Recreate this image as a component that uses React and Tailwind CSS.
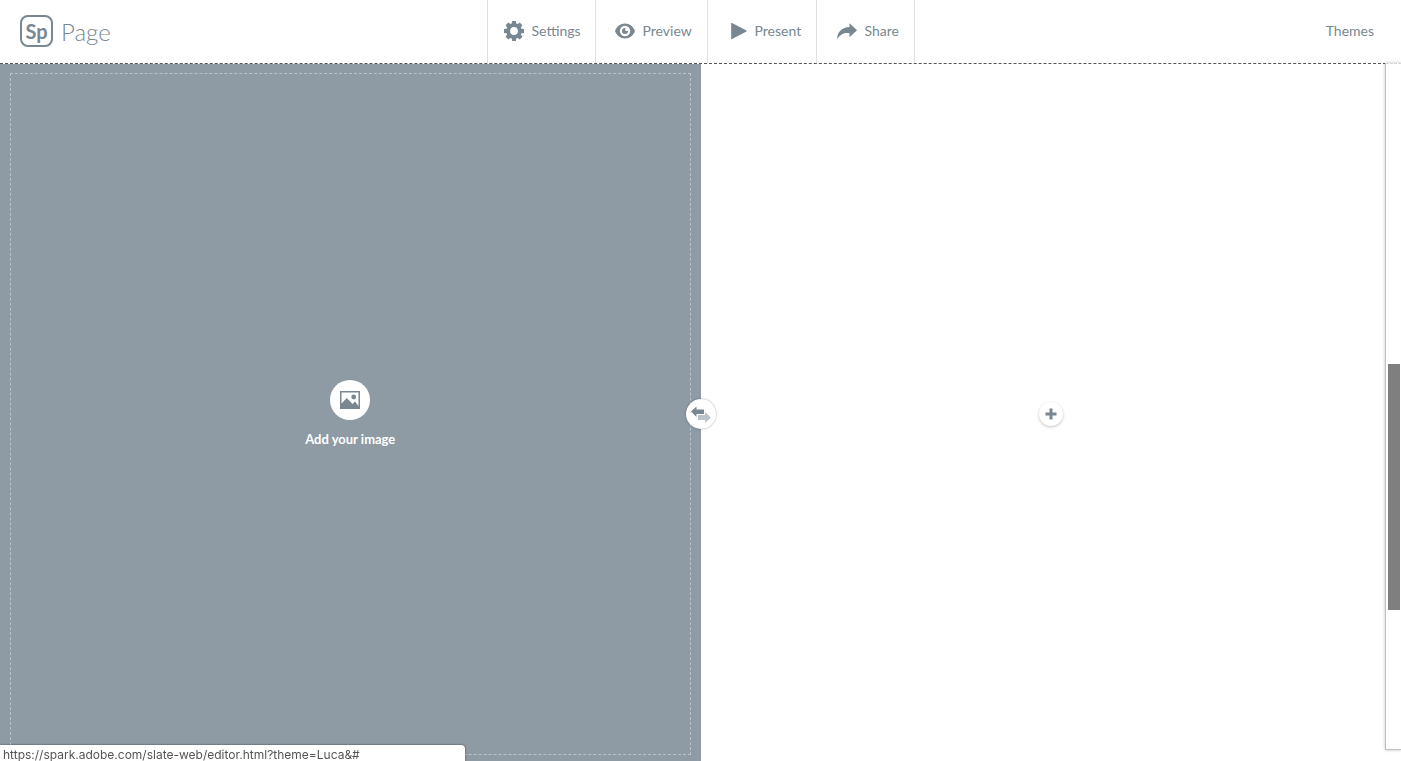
const SettingsIcon = () => (
  <svg viewBox="0 0 20 20" className="h-5 w-5" fill="currentColor" aria-hidden="true">
    <path
      fillRule="evenodd"
      d="M8.100 0h3.800l.4 2.600 1.300.5 2.200-1.500 2.600 2.600-1.500 2.200.5 1.300 2.600.4v3.800l-2.600.4-.5 1.300 1.500 2.200-2.600 2.600-2.200-1.500-1.300.5-.4 2.600H8.100l-.4-2.600-1.300-.5-2.200 1.500-2.600-2.600 1.500-2.200-.5-1.300L0 11.900V8.100l2.600-.4.500-1.300-1.500-2.200 2.600-2.600 2.200 1.500 1.300-.5zM10 6.100a3.900 3.900 0 1 0 0 7.800 3.900 3.900 0 0 0 0-7.800z"
    />
  </svg>
);

const PreviewIcon = () => (
  <svg viewBox="0 0 20 16" className="h-4 w-5" fill="currentColor" aria-hidden="true">
    <path
      fillRule="evenodd"
      d="M10 .5C5.400.5 1.800 3.400 0 8c1.800 4.600 5.400 7.500 10 7.500s8.200-2.900 10-7.500C18.200 3.400 14.600.5 10 .5zm0 2.300a5.200 5.200 0 1 1 0 10.400 5.200 5.200 0 0 1 0-10.400z"
    />
    <path d="M10 5a3 3 0 1 0 3 3h-2.700V5z" />
  </svg>
);

const PresentIcon = () => (
  <svg viewBox="0 0 16 16" className="h-4 w-4" fill="currentColor" aria-hidden="true">
    <path d="M.2 0h.8L15.500 7.500v1L1 16H.2z" />
  </svg>
);

const ShareIcon = () => (
  <svg viewBox="0 0 20 17" className="h-[17px] w-5" fill="currentColor" aria-hidden="true">
    <path d="M12.500.3 20 7.300l-7.500 6.900V10C6.700 9.500 3 11.300.3 16.300-.2 9.500 4.800 4.400 12.500 4z" />
  </svg>
);

const ImageIcon = () => (
  <svg viewBox="0 0 20 18" className="h-[18px] w-5" aria-hidden="true">
    <rect width="20" height="18" fill="#788791" />
    <path
      d="M1.500 1.500h17v13.500l-3.500-4.500-2.500 2.500-5.700-6-5.300 5.500z"
      fill="#fff"
    />
    <circle cx="13.700" cy="6" r="2.400" fill="#788791" />
  </svg>
);

const SwapIcon = () => (
  <svg viewBox="0 0 20 17" className="h-[17px] w-5" aria-hidden="true">
    <path d="M0 5.500 5.500.5v3H13v4.500H5.500v3z" fill="#788791" />
    <path d="M7 9h7V6l6 5.500-6 5.500v-3H7z" fill="#bbc3c8" />
  </svg>
);

const PlusIcon = () => (
  <svg viewBox="0 0 12 12" className="h-3 w-3" fill="currentColor" aria-hidden="true">
    <path d="M4.500.5h3v4h4v3h-4v4h-3v-4h-4v-3h4z" />
  </svg>
);

const NAV_ITEMS = [
  { label: 'Settings', icon: SettingsIcon, style: 'w-[108px] pl-4' },
  { label: 'Preview', icon: PreviewIcon, style: 'w-[112px] pl-[19px]' },
  { label: 'Present', icon: PresentIcon, style: 'w-[109px] pl-[23px]' },
  { label: 'Share', icon: ShareIcon, style: 'w-[98px] pl-5' },
];

const Header = () => (
  <header className="grid h-[63px] shrink-0 grid-cols-[1fr_auto_1fr] bg-white">
    <a href="#" className="flex items-center gap-2 pb-px pl-5">
      <span className="flex h-8 w-[33px] items-center justify-center rounded-lg border-2 border-[#788791] text-xl leading-none font-bold">
        Sp
      </span>
      <span className="pt-px text-2xl font-light">Page</span>
    </a>
    <nav className="flex border-l border-[#dde1e4]">
      {NAV_ITEMS.map(({ label, icon: Icon, style }) => (
        <button
          key={label}
          type="button"
          className={`flex cursor-pointer items-center gap-2 border-r border-[#dde1e4] pb-px ${style}`}
        >
          <Icon />
          {label}
        </button>
      ))}
    </nav>
    <button type="button" className="cursor-pointer justify-self-end pr-[27px] pb-px">
      Themes
    </button>
  </header>
);

const ImagePane = () => (
  <section className="flex w-1/2 bg-[#8e9ba4] px-[10px] pt-[9px] pb-[6px]">
    <div className="flex flex-1 items-center justify-center border border-dashed border-[#bbc3c8]">
      <button
        type="button"
        className="flex cursor-pointer flex-col items-center gap-[10px] text-[13px] leading-[18px] font-bold text-white"
      >
        <span className="flex h-10 w-10 items-center justify-center rounded-full bg-white">
          <ImageIcon />
        </span>
        Add your image
      </button>
    </div>
  </section>
);

const TextPane = () => (
  <section className="flex w-1/2 items-center justify-center bg-white pt-[9px] pb-[6px]">
    <button
      type="button"
      aria-label="Add content"
      className="flex h-6 w-6 cursor-pointer items-center justify-center rounded-full bg-white shadow-[0_1px_3px_rgba(0,0,0,0.25)]"
    >
      <PlusIcon />
    </button>
  </section>
);

const App = () => {
  return (
    <div className="flex min-h-screen flex-col bg-white font-['Lato',sans-serif] text-sm text-[#788791]">
      <Header />
      <main className="relative flex flex-1 border-t border-dashed border-[#50565b] bg-white">
        <ImagePane />
        <TextPane />
        <div className="pointer-events-none absolute inset-0 flex items-center justify-center pt-[9px] pb-[6px]">
          <button
            type="button"
            aria-label="Swap sides"
            className="pointer-events-auto flex h-[30px] w-[30px] cursor-pointer items-center justify-center rounded-full bg-white shadow-[0_0_2px_rgba(0,0,0,0.4)]"
          >
            <SwapIcon />
          </button>
        </div>
        <aside className="absolute -top-px right-0 bottom-[11px] w-4 border-b border-l border-[#c0c0c0] bg-white shadow-[0_0_3px_rgba(0,0,0,0.25)]">
          <div className="h-full border-t border-dashed border-[#d5d5d5] pt-[300px] pr-px pl-[2px]">
            <div className="h-[246px] bg-[#7f7f7f]" />
          </div>
        </aside>
      </main>
      <div className="fixed bottom-0 left-0 h-4 w-1/3 max-w-[465px] rounded-tr bg-white pl-[3px] font-['Inter',sans-serif] text-xs leading-5 text-[#555] shadow-[0_0_2px_rgba(0,0,0,0.7)]">
        https://spark.adobe.com/slate-web/editor.html?theme=Luca&amp;#
      </div>
    </div>
  );
};

export default App;
